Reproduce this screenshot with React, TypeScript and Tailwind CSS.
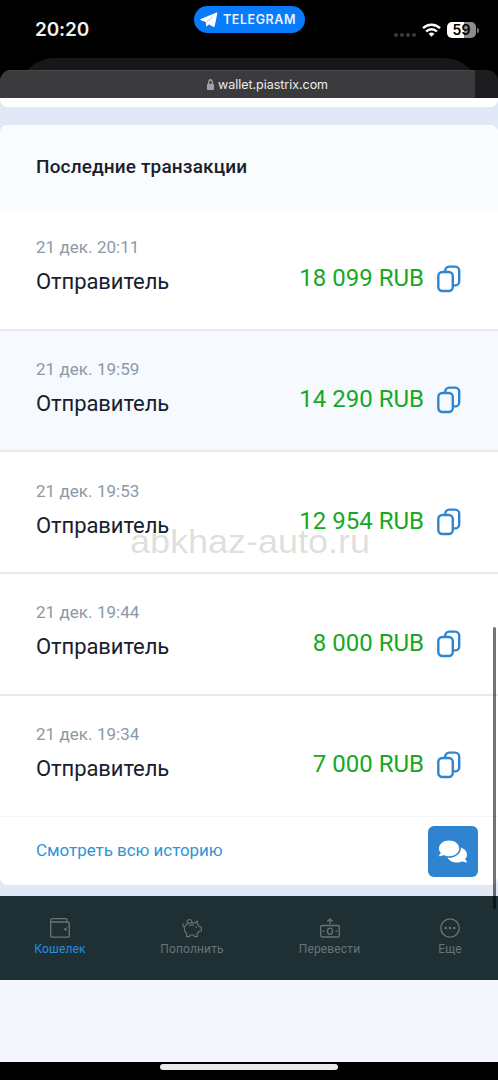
import React from 'react';
import { FaComments, FaLock } from 'react-icons/fa';

interface Transaction {
  date: string;
  title: string;
  amount: string;
}

const transactions: Transaction[] = [
  { date: '21 дек. 20:11', title: 'Отправитель', amount: '18 099 RUB' },
  { date: '21 дек. 19:59', title: 'Отправитель', amount: '14 290 RUB' },
  { date: '21 дек. 19:53', title: 'Отправитель', amount: '12 954 RUB' },
  { date: '21 дек. 19:44', title: 'Отправитель', amount: '8 000 RUB' },
  { date: '21 дек. 19:34', title: 'Отправитель', amount: '7 000 RUB' },
];

const CopyIcon: React.FC = () => (
  <svg className="w-6 h-7 shrink-0" viewBox="0 0 24 28" fill="none" stroke="#2f86cf" strokeWidth={2.4}>
    <path d="M8.2 7V5.6a4 4 0 0 1 4-4h6a4 4 0 0 1 4 4v10.8a4 4 0 0 1-4 4h-2" />
    <rect x="1.3" y="7" width="14.5" height="19" rx="4" />
  </svg>
);

const PlaneIcon: React.FC = () => (
  <svg className="w-[18px] h-[16px]" viewBox="0 0 18 16" fill="#fff">
    <path d="M.8 7.1 16 .7c.9-.4 1.5.1 1.3 1.1l-2.6 12.3c-.2 1-.9 1.2-1.7.7l-6.600-4.100L5.700 10 .9 8.200c-.9-.3-.9-.8-.1-1.100z" />
    <path d="m5.700 9.500.5 4.500c.1.500.5.500.9.100l2.400-2.200z" />
    <path d="m6.300 10 6.500-5" stroke="#087bfb" strokeWidth={0.4} />
  </svg>
);

const WifiIcon: React.FC = () => (
  <svg className="w-[19px] h-[14px]" viewBox="0 0 19 14" fill="none" stroke="#fff" strokeWidth={2.4}>
    <path d="M1 5.2a12.2 12.2 0 0 1 17 0" />
    <path d="M4.1 8.5a7.7 7.7 0 0 1 10.8 0" />
    <path d="M9.5 13.8 6.6 10.8a4.2 4.2 0 0 1 5.8 0z" fill="#fff" stroke="none" />
  </svg>
);

const WalletIcon: React.FC = () => (
  <svg className="w-5 h-5" viewBox="0 0 20 20" fill="none" stroke="currentColor" strokeWidth={1.3}>
    <path d="M17 3.8V2A1.3 1.3 0 0 0 15.7.7H2.4A1.6 1.6 0 0 0 .7 2.3v14.9a2 2 0 0 0 2 2h14.6a2 2 0 0 0 2-2V6a2 2 0 0 0-2-2H2.4A1.6 1.6 0 0 1 .7 2.3" />
    <circle cx="15.5" cy="11.3" r="1.3" fill="currentColor" stroke="none" />
    <path d="M19.3 8.8c-1.6 0-2.5.5-3 1.3M19.3 13.8c-1.6 0-2.5-.5-3-1.3" strokeWidth={0.5} />
  </svg>
);

const PigIcon: React.FC = () => (
  <svg className="w-5 h-5" viewBox="0 0 20 20" fill="none" stroke="currentColor" strokeWidth={1.2} strokeLinejoin="round" strokeLinecap="round">
    <path d="M9.5 4.6c1.3 0 2.4.1 3.3.5l2.4-2.2.2 3.3c.8.7 1.5 1.5 1.9 2.4l2 .6v3.6l-2.4.8c-.5.9-1.2 1.6-2 2.2l.5 2.5-2.8.4-.9-1.7H8.1l-.8 1.7H4.6l.1-3C3 14.5 2.4 12.7 2.4 10.8c0-3.5 2.9-6.2 7.1-6.2z" />
    <path d="M5.3 5.2A2.5 2.5 0 1 1 9.9 3.3M2.6 9.2C1 9 .4 7.4 1.1 5.8" />
    <path d="M7.3 7.5c1.3-.6 2.6-.7 4-.3" />
    <circle cx="14.3" cy="9.2" r=".8" fill="currentColor" stroke="none" />
  </svg>
);

const TransferIcon: React.FC = () => (
  <svg className="w-5 h-5" viewBox="0 0 20 20" fill="none" stroke="currentColor" strokeWidth={1.3}>
    <path d="M10 6V1M7.3 3.5 10 .9l2.7 2.6" />
    <rect x=".7" y="7.5" width="18.6" height="11.5" rx="1.6" />
    <ellipse cx="10" cy="13.2" rx="2.5" ry="3.1" />
    <path d="M2.5 13.2h2M15.5 13.2h2" />
  </svg>
);

const MoreIcon: React.FC = () => (
  <svg className="w-5 h-5" viewBox="0 0 20 20" fill="none" stroke="currentColor" strokeWidth={1.3}>
    <circle cx="10" cy="10" r="9.2" />
    <g fill="currentColor" stroke="none">
      <circle cx="5.8" cy="10" r="1.3" />
      <circle cx="10" cy="10" r="1.3" />
      <circle cx="14.2" cy="10" r="1.3" />
    </g>
  </svg>
);

const StatusBar: React.FC = () => (
  <div className="flex items-start h-[58px] font-['Inter',sans-serif] text-white">
    <div className="w-[194px] pl-[35px] pt-[18px] text-[19px] leading-6 font-semibold tracking-[-0.15px] text-[#f2f2f2]">20:20</div>
    <div className="flex items-center pl-[6px] gap-[5px] w-[111px] h-[27px] mt-1.5 rounded-full bg-[#087bfb]">
      <PlaneIcon />
      <span className="text-[12.5px] leading-4 font-semibold tracking-[0.55px] text-[#eaf4ff]">TELEGRAM</span>
    </div>
    <div className="flex items-center ml-auto mt-[21px] h-[18px] pr-[19px]">
      <div className="flex gap-[2px] mt-[9px] mr-[6px]">
        <span className="w-1 h-1 rounded-full bg-[#3c3c3e]" />
        <span className="w-1 h-1 rounded-full bg-[#3c3c3e]" />
        <span className="w-1 h-1 rounded-full bg-[#3c3c3e]" />
        <span className="w-1 h-1 rounded-full bg-[#3c3c3e]" />
      </div>
      <WifiIcon />
      <div className="flex items-center justify-center ml-[6px] w-[29px] h-4 rounded-[5px] bg-linear-to-r from-white from-59% to-[#8c8c8c] to-59% text-black text-[14px] leading-4 font-semibold">
        59
      </div>
      <span className="w-[2px] h-[5px] ml-[1px] rounded-r-full bg-[#777]" />
    </div>
  </div>
);

const Row: React.FC<{ item: Transaction; active: boolean }> = ({ item, active }) => (
  <div
    className={`flex justify-between h-[121.7px] pl-9 pr-[37px] border-b-2 border-[#e7eaed] last:border-b last:border-[#f3f4f5] ${
      active ? 'bg-[#f6fafe]' : 'bg-white'
    }`}
  >
    <div className="pt-[28.2px]">
      <div className="text-[17px] leading-5 tracking-[0.05px] text-[#8b99a8]">{item.date}</div>
      <div className="mt-[11px] text-[22px] leading-7 tracking-[-0.08px] text-[#18202c]">{item.title}</div>
    </div>
    <div className="flex items-start pt-[54.7px] gap-[13px]">
      <span className="text-[24px] leading-7 text-[#16a825]">{item.amount}</span>
      <div className="mt-[1px]">
        <CopyIcon />
      </div>
    </div>
  </div>
);

const TabBar: React.FC = () => (
  <nav className="flex h-[84px] pt-[22px] bg-[#1f3035] text-[#687477] text-[12px] leading-4 tracking-[0.15px]">
    <div className="flex flex-col items-center gap-[3px] w-[120px] shrink-0">
      <WalletIcon />
      <span className="text-[#2190e5]">Кошелек</span>
    </div>
    <div className="flex flex-col items-center gap-[3px] w-36 shrink-0">
      <PigIcon />
      <span>Пополнить</span>
    </div>
    <div className="flex flex-col items-center gap-[3px] w-[131px] shrink-0">
      <TransferIcon />
      <span>Перевести</span>
    </div>
    <div className="flex flex-col items-center gap-[3px] w-[103px] pl-[7px]">
      <MoreIcon />
      <span>Еще</span>
    </div>
  </nav>
);

const App: React.FC = () => {
  return (
    <div className="relative flex flex-col w-[498px] h-[1080px] overflow-hidden bg-black font-['Roboto',sans-serif]">
      <StatusBar />
      <div className="h-10 -mb-7 mx-[18px] shrink-0 rounded-t-[36px] bg-[#171719]" />

      {/* Browser bar */}
      <div className="relative flex h-[28px] shrink-0 rounded-t-[11px] overflow-hidden bg-[#1d1d1f]">
        <div className="flex items-center w-[475px] pl-[207px] gap-[4px] bg-[#3b3b3d] border-t border-[#464648]">
          <FaLock className="w-[7px] h-[11px] text-[#a2a2a4]" preserveAspectRatio="none" />
          <span className="font-['Inter',sans-serif] text-[12.5px] leading-4 tracking-[-0.03px] text-[#ededed]">wallet.piastrix.com</span>
        </div>
      </div>

      {/* Page */}
      <main className="flex flex-col h-[798px] shrink-0 bg-[#e1e9f6]">
        <div className="h-[9px] rounded-b-[8px] bg-white" />
        <section className="mt-[18px] h-[760px] rounded-[8px] overflow-hidden bg-white">
          <h2 className="h-[84px] pl-9 pt-[30px] bg-[#fafbfc] text-[19px] leading-6 font-medium tracking-[0.15px] text-[#18202c]">
            Последние транзакции
          </h2>
          <div>
            {transactions.map((item, i) => (
              <Row key={item.date} item={item} active={i === 1} />
            ))}
          </div>
          <div className="flex justify-between pl-9 pr-5 pt-[8.5px]">
            <a href="#" className="mt-[14px] text-[17px] leading-5 tracking-[-0.05px] text-[#3193d6]">
              Смотреть всю историю
            </a>
            <button className="flex items-center justify-center w-[50px] h-[51px] rounded-[6px] bg-[#2f84d2]">
              <FaComments className="w-7 h-[25px] text-white" />
            </button>
          </div>
        </section>
      </main>

      <TabBar />
      <div className="h-[82px] bg-[#f5f6fb]" />
      <div className="flex justify-center h-[18px] pt-[2px]">
        <div className="w-[178px] h-[6px] rounded-full bg-[#e9e9e9]" />
      </div>

      {/* Scroll thumb */}
      <div className="absolute right-[2px] top-[627px] w-[3px] h-[282px] rounded-full bg-black/55" />
      {/* Watermark */}
      <div className="absolute left-[130px] top-[522px] origin-left scale-x-[1.09] font-['Liberation_Sans',sans-serif] text-[33px] leading-10 text-black/15 whitespace-nowrap">
        abkhaz-auto.ru
      </div>
    </div>
  );
};

export default App;
